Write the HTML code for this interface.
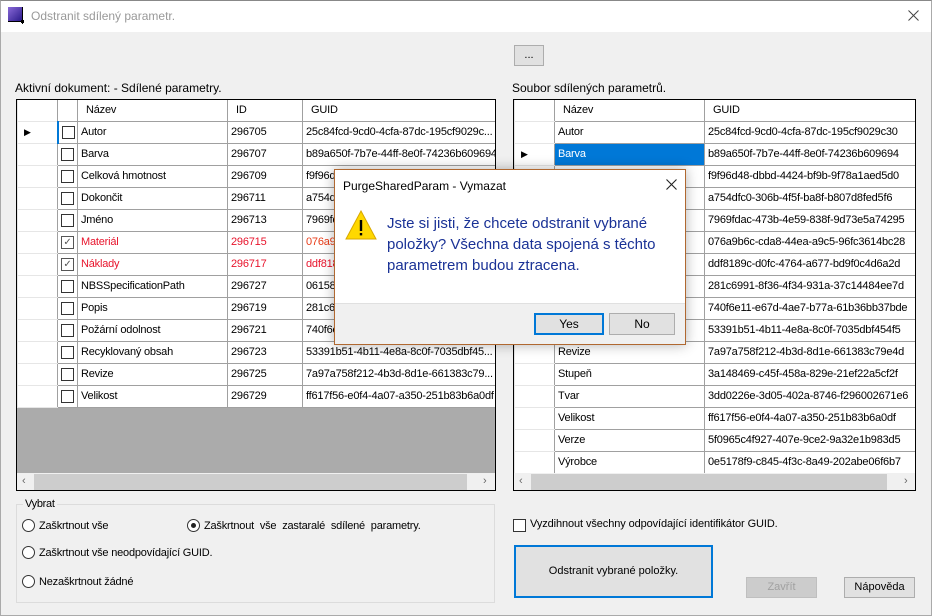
<!DOCTYPE html>
<html><head><meta charset="utf-8"><style>
*{box-sizing:border-box;margin:0;padding:0}
body{width:932px;height:616px;background:#f0f0f0;font-family:"Liberation Sans",sans-serif;font-size:11px;color:#000;position:relative;overflow:hidden}
.a{position:absolute}
.win{left:0;top:0;width:932px;height:616px;border:1px solid #aaa;border-top:1px solid #888}
.title{left:1px;top:1px;width:930px;height:31px;background:#fff}
table{border-collapse:collapse;table-layout:fixed;background:#fff}
td{height:22px;border:1px solid #a0a0a0;padding:0 3px;white-space:nowrap;overflow:hidden;font-size:11px;letter-spacing:-0.2px}
td.rh{border-color:#e6e6e6 #a0a0a0 #e6e6e6 #e6e6e6;background:#fff}
tr.hd td{height:21px;border-top:none}
.cb{display:inline-block;width:13px;height:13px;border:1px solid #333;background:#fff;vertical-align:middle;position:relative}
.red{color:#e8142c}
.or{color:#e83c18}
.grid{background:#ababab;border:1px solid #000;overflow:hidden}
.sb{height:18px;background:#f0f0f0}
.sel{background:#0078d7;color:#fff}
.rad{display:inline-block;width:13px;height:13px;border:1px solid #333;border-radius:50%;background:#fff;position:absolute}
.btn{background:#e1e1e1;border:1px solid #adadad;text-align:center}
</style></head><body>
<div class="a win"></div>
<div class="a title"></div>
<svg class="a" style="left:8px;top:7px" width="16" height="17"><defs><linearGradient id="g" x1="0" y1="0" x2="1" y2="1"><stop offset="0" stop-color="#8a6ad8"/><stop offset="1" stop-color="#2a1a8a"/></linearGradient></defs><rect x="0" y="0" width="14" height="14" fill="url(#g)"/><path d="M0 14.5H16M14.5 0V17" stroke="#000" stroke-width="1"/><rect x="13" y="13" width="3" height="3" fill="#000"/></svg>
<div class="a" style="left:31px;top:9px;font-size:12px;color:#999">Odstranit sdílený parametr.</div>
<svg class="a" style="left:908px;top:10px" width="11" height="11"><path d="M0.5 0.5L10.5 10.5M10.5 0.5L0.5 10.5" stroke="#444" stroke-width="1"/></svg>
<div class="a btn" style="left:514px;top:45px;width:30px;height:21px;line-height:18px">...</div>
<div class="a" style="left:15px;top:81px;font-size:12px">Aktivní dokument: - Sdílené parametry.</div>
<div class="a" style="left:512px;top:81px;font-size:12px">Soubor sdílených parametrů.</div>

<div class="a grid" style="left:16px;top:99px;width:480px;height:392px">
<table style="width:478px">
<colgroup><col style="width:40px"><col style="width:20px"><col style="width:150px"><col style="width:75px"><col style="width:193px"></colgroup>
<tr class="hd"><td class="rh"></td><td></td><td style="padding-left:8px">Název</td><td style="padding-left:8px">ID</td><td style="padding-left:8px">GUID</td></tr>
<tr><td class="rh" style="font-size:9px;padding-left:6px">▶</td><td style="border-left:2px solid #0078d7"><span class="cb"></span></td><td>Autor</td><td>296705</td><td>25c84fcd-9cd0-4cfa-87dc-195cf9029c...</td></tr>
<tr><td class="rh"></td><td><span class="cb"></span></td><td>Barva</td><td>296707</td><td>b89a650f-7b7e-44ff-8e0f-74236b609694</td></tr>
<tr><td class="rh"></td><td><span class="cb"></span></td><td>Celková hmotnost</td><td>296709</td><td>f9f96d48-dbbd-4424-bf9b</td></tr>
<tr><td class="rh"></td><td><span class="cb"></span></td><td>Dokončit</td><td>296711</td><td>a754dfc0-306b</td></tr>
<tr><td class="rh"></td><td><span class="cb"></span></td><td>Jméno</td><td>296713</td><td>7969fdac-473b</td></tr>
<tr><td class="rh"></td><td><span class="cb" style="border-color:#555;color:#555;font-size:10px;line-height:11px;text-align:center">✓</span></td><td class="red">Materiál</td><td class="red">296715</td><td class="or">076a9b6c-cda8</td></tr>
<tr><td class="rh"></td><td><span class="cb" style="border-color:#555;color:#555;font-size:10px;line-height:11px;text-align:center">✓</span></td><td class="red">Náklady</td><td class="red">296717</td><td class="red">ddf8189c-d0fc</td></tr>
<tr><td class="rh"></td><td><span class="cb"></span></td><td>NBSSpecificationPath</td><td>296727</td><td>06158e10-8f36</td></tr>
<tr><td class="rh"></td><td><span class="cb"></span></td><td>Popis</td><td>296719</td><td>281c6991-8f36</td></tr>
<tr><td class="rh"></td><td><span class="cb"></span></td><td>Požární odolnost</td><td>296721</td><td>740f6e11-e67d</td></tr>
<tr><td class="rh"></td><td><span class="cb"></span></td><td>Recyklovaný obsah</td><td>296723</td><td>53391b51-4b11-4e8a-8c0f-7035dbf45...</td></tr>
<tr><td class="rh"></td><td><span class="cb"></span></td><td>Revize</td><td>296725</td><td>7a97a758f212-4b3d-8d1e-661383c79...</td></tr>
<tr><td class="rh"></td><td><span class="cb"></span></td><td>Velikost</td><td>296729</td><td>ff617f56-e0f4-4a07-a350-251b83b6a0df</td></tr>
</table>
<div class="a sb" style="left:0;top:373px;width:478px"><div class="a" style="left:17px;top:1px;width:433px;height:16px;background:#cdcdcd"></div><span class="a" style="left:5px;top:2px;color:#666">‹</span><span class="a" style="left:466px;top:2px;color:#666">›</span></div>
</div>

<div class="a grid" style="left:513px;top:99px;width:403px;height:392px">
<table style="width:401px">
<colgroup><col style="width:40px"><col style="width:150px"><col style="width:211px"></colgroup>
<tr class="hd"><td class="rh"></td><td style="padding-left:8px">Název</td><td style="padding-left:8px">GUID</td></tr>
<tr><td class="rh"></td><td>Autor</td><td>25c84fcd-9cd0-4cfa-87dc-195cf9029c30</td></tr>
<tr><td class="rh" style="font-size:9px;padding-left:6px">▶</td><td class="sel">Barva</td><td>b89a650f-7b7e-44ff-8e0f-74236b609694</td></tr>
<tr><td class="rh"></td><td>Celková hmotnost</td><td>f9f96d48-dbbd-4424-bf9b-9f78a1aed5d0</td></tr>
<tr><td class="rh"></td><td>Dokončit</td><td>a754dfc0-306b-4f5f-ba8f-b807d8fed5f6</td></tr>
<tr><td class="rh"></td><td>Jméno</td><td>7969fdac-473b-4e59-838f-9d73e5a74295</td></tr>
<tr><td class="rh"></td><td>Materiál</td><td>076a9b6c-cda8-44ea-a9c5-96fc3614bc28</td></tr>
<tr><td class="rh"></td><td>Náklady</td><td>ddf8189c-d0fc-4764-a677-bd9f0c4d6a2d</td></tr>
<tr><td class="rh"></td><td>NBSSpecificationPath</td><td>281c6991-8f36-4f34-931a-37c14484ee7d</td></tr>
<tr><td class="rh"></td><td>Popis</td><td>740f6e11-e67d-4ae7-b77a-61b36bb37bde</td></tr>
<tr><td class="rh"></td><td>Požární odolnost</td><td>53391b51-4b11-4e8a-8c0f-7035dbf454f5</td></tr>
<tr><td class="rh"></td><td>Revize</td><td>7a97a758f212-4b3d-8d1e-661383c79e4d</td></tr>
<tr><td class="rh"></td><td>Stupeň</td><td>3a148469-c45f-458a-829e-21ef22a5cf2f</td></tr>
<tr><td class="rh"></td><td>Tvar</td><td>3dd0226e-3d05-402a-8746-f296002671e6</td></tr>
<tr><td class="rh"></td><td>Velikost</td><td>ff617f56-e0f4-4a07-a350-251b83b6a0df</td></tr>
<tr><td class="rh"></td><td>Verze</td><td>5f0965c4f927-407e-9ce2-9a32e1b983d5</td></tr>
<tr><td class="rh"></td><td>Výrobce</td><td>0e5178f9-c845-4f3c-8a49-202abe06f6b7</td></tr>
</table>
<div class="a sb" style="left:0;top:373px;width:401px"><div class="a" style="left:17px;top:1px;width:356px;height:16px;background:#cdcdcd"></div><span class="a" style="left:5px;top:2px;color:#666">‹</span><span class="a" style="left:390px;top:2px;color:#666">›</span></div>
</div>

<div class="a" style="left:16px;top:504px;width:479px;height:99px;border:1px solid #dcdcdc"></div>
<div class="a" style="left:23px;top:498px;background:#f0f0f0;padding:0 2px;letter-spacing:-0.3px">Vybrat</div>
<span class="rad" style="left:22px;top:519px"></span><div class="a" style="left:39px;top:520px;letter-spacing:-0.2px">Zaškrtnout vše</div>
<span class="rad" style="left:187px;top:519px"><span class="a" style="left:3px;top:3px;width:5px;height:5px;border-radius:50%;background:#222"></span></span><div class="a" style="left:204px;top:520px;word-spacing:3px;letter-spacing:-0.2px">Zaškrtnout vše zastaralé sdílené parametry.</div>
<span class="rad" style="left:22px;top:546px"></span><div class="a" style="left:39px;top:547px;letter-spacing:-0.2px">Zaškrtnout vše neodpovídající GUID.</div>
<span class="rad" style="left:22px;top:575px"></span><div class="a" style="left:39px;top:576px;letter-spacing:-0.2px">Nezaškrtnout žádné</div>

<span class="cb a" style="left:513px;top:519px"></span><div class="a" style="left:530px;top:518px;letter-spacing:-0.1px">Vyzdihnout všechny odpovídající identifikátor GUID.</div>
<div class="a btn" style="left:514px;top:545px;width:199px;height:53px;border:2px solid #0078d7;line-height:49px">Odstranit vybrané položky.</div>
<div class="a btn" style="left:746px;top:577px;width:71px;height:21px;line-height:19px;color:#a0a0a0;background:#ccc;border-color:#bfbfbf">Zavřít</div>
<div class="a btn" style="left:844px;top:577px;width:71px;height:21px;line-height:19px">Nápověda</div>

<div class="a" style="left:334px;top:169px;width:352px;height:176px;background:#fff;border:1px solid #b06830;box-shadow:0 0 12px rgba(0,0,0,.3)">
<div class="a" style="left:8px;top:9px;font-size:12px">PurgeSharedParam - Vymazat</div>
<svg class="a" style="left:331px;top:9px" width="11" height="11"><path d="M0.5 0.5L10.5 10.5M10.5 0.5L0.5 10.5" stroke="#222" stroke-width="1.1"/></svg>
<div class="a btn" style="display:none"></div>
<svg class="a" style="left:10px;top:40px" width="32" height="30"><path d="M16 1 L31 29 H1 Z" fill="#ffd800" stroke="#d8a800" stroke-width="1"/><rect x="14.8" y="10" width="2.4" height="11" fill="#000"/><rect x="14.8" y="23" width="2.4" height="2.4" fill="#000"/></svg>
<div class="a" style="left:52px;top:43px;font-size:15px;line-height:21px;color:#1a3296;width:300px">Jste si jisti, že chcete odstranit vybrané položky? Všechna data spojená s těchto parametrem budou ztracena.</div>
<div class="a" style="left:0;top:133px;width:350px;height:41px;background:#f0f0f0;border-top:1px solid #e0e0e0"></div>
<div class="a btn" style="left:199px;top:143px;width:70px;height:22px;border:2px solid #0078d7;line-height:18px;font-size:12px">Yes</div>
<div class="a btn" style="left:274px;top:143px;width:66px;height:22px;line-height:20px;font-size:12px">No</div>
</div>
</body></html>
